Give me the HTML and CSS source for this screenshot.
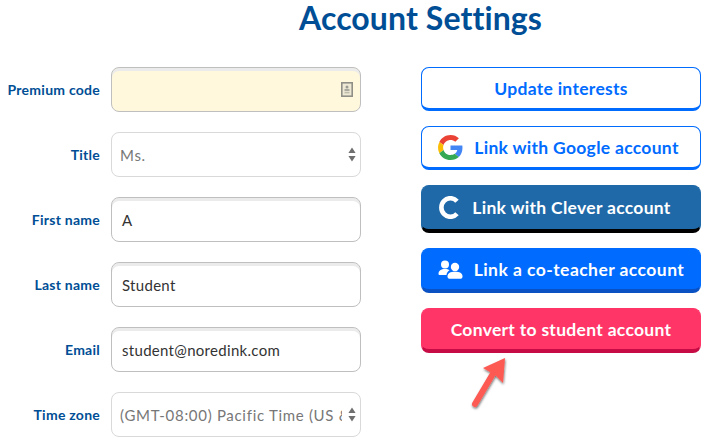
FILE: index.html
```html
<!DOCTYPE html>
<html lang="en">
<head>
<meta charset="utf-8">
<title>Account Settings</title>
<link rel="stylesheet" href="styles.css">
</head>
<body>
<main class="page">
  <h1 class="title">Account Settings</h1>
  <div class="columns">
    <form class="form">
      <div class="row">
        <span class="label">Premium code</span>
        <div class="field field-input field-code">
          <svg class="code-icon" width="12" height="15" viewBox="0 0 12 15">
            <rect x="0.800" y="0.800" width="10.400" height="13.400" fill="#eee9d5" stroke="#8f8f88" stroke-width="1.600"/>
            <circle cx="6" cy="5" r="1.500" fill="#9a9a92"/>
            <rect x="3.500" y="7.200" width="5" height="1.600" fill="#9a9a92"/>
            <rect x="3.500" y="9.800" width="5" height="1.600" fill="#bdbbaa"/>
          </svg>
        </div>
      </div>
      <div class="row">
        <span class="label">Title</span>
        <div class="field field-select"><span class="select-text">Ms.</span>
          <svg class="updown" width="8" height="15" viewBox="0 0 8 15"><path d="M4 0.500 L7.600 6 H0.400 Z M0.400 9 H7.600 L4 14.500 Z" fill="#6f6f6f"/></svg>
        </div>
      </div>
      <div class="row">
        <span class="label">First name</span>
        <div class="field field-input">A</div>
      </div>
      <div class="row">
        <span class="label">Last name</span>
        <div class="field field-input">Student</div>
      </div>
      <div class="row">
        <span class="label">Email</span>
        <div class="field field-input">student@noredink.com</div>
      </div>
      <div class="row">
        <span class="label">Time zone</span>
        <div class="field field-select"><span class="select-text">(GMT-08:00) Pacific Time (US &amp; Canada)</span>
          <svg class="updown" width="8" height="15" viewBox="0 0 8 15"><path d="M4 0.500 L7.600 6 H0.400 Z M0.400 9 H7.600 L4 14.500 Z" fill="#6f6f6f"/></svg>
        </div>
      </div>
    </form>
    <div class="actions">
      <button type="button" class="btn btn-outline">Update interests</button>
      <button type="button" class="btn btn-outline btn-google">
        <svg class="btn-icon" width="25" height="25" viewBox="0 0 48 48">
          <path fill="#EA4335" d="M24 9.500c3.500 0 6.700 1.200 9.200 3.600l6.900-6.900C35.900 2.400 30.500 0 24 0 14.600 0 6.500 5.400 2.600 13.200l8 6.200C12.500 13.700 17.800 9.500 24 9.500z"/>
          <path fill="#4285F4" d="M47 24.500c0-1.600-.1-3.100-.4-4.500H24v9h13c-.6 3-2.200 5.500-4.800 7.200l7.700 6C44.400 38.500 47 32 47 24.500z"/>
          <path fill="#FBBC05" d="M10.600 28.600c-.5-1.500-.8-3-.8-4.600s.3-3.100.8-4.600l-8-6.200C.9 16.500 0 20.100 0 24s.9 7.500 2.600 10.800l8-6.200z"/>
          <path fill="#34A853" d="M24 48c6.500 0 11.900-2.100 15.900-5.800l-7.700-6c-2.200 1.500-4.900 2.300-8.200 2.300-6.200 0-11.500-4.200-13.400-9.900l-8 6.200C6.500 42.600 14.600 48 24 48z"/>
        </svg>
        <span>Link with Google account</span>
      </button>
      <button type="button" class="btn btn-clever">
        <svg class="btn-icon" width="21" height="23" viewBox="0 0 21 23"><path d="M19 17.800 A9 9.300 0 1 1 19 5.200" fill="none" stroke="#fff" stroke-width="4.600"/></svg>
        <span>Link with Clever account</span>
      </button>
      <button type="button" class="btn btn-blue">
        <svg class="btn-icon" width="25" height="19" viewBox="0 0 25 19">
          <circle cx="7" cy="4.500" r="4" fill="#fff"/>
          <path d="M0.500 14 C0.500 10.500 3 9 7 9 C9 9 10.500 9.500 11.500 10.200 C9.500 11.500 8.500 13 8.500 15 H2 C1 15 0.500 14.800 0.500 14Z" fill="#fff"/>
          <circle cx="17" cy="7" r="4.200" fill="#fff"/>
          <path d="M9.500 16.500 C9.500 13 12.500 11.800 17 11.800 C21.500 11.800 24.500 13 24.500 16.500 C24.500 18 23.500 18.800 22 18.800 H12 C10.500 18.800 9.500 18 9.500 16.500Z" fill="#fff"/>
        </svg>
        <span>Link a co-teacher account</span>
      </button>
      <button type="button" class="btn btn-pink">Convert to student account</button>
    </div>
  </div>
  <svg class="arrow" width="46" height="60" viewBox="0 0 46 60">
    <defs><filter id="arrow-shadow" x="-30%" y="-30%" width="160%" height="160%"><feDropShadow dx="0.500" dy="1.500" stdDeviation="1.300" flood-color="#000" flood-opacity="0.550"/></filter></defs>
    <g filter="url(#arrow-shadow)">
      <path d="M5 51 L24 19" stroke="#fc5a52" stroke-width="6" stroke-linecap="round" fill="none"/>
      <path d="M35 5 L33 30 L25 22 L13 15 Z" fill="#fc5a52"/>
    </g>
  </svg>
</main>
</body>
</html>
```

FILE: styles.css
```css
* { box-sizing: border-box; }
html, body { margin: 0; padding: 0; background: #fff; overflow: hidden; }
body { width: 708px; height: 448px; font-family: Lato, "Open Sans", sans-serif; }
.page { position: relative; width: 708px; height: 448px; padding: 0 7px 0 7px; }
.title {
  margin: 0;
  padding-left: 292px;
  height: 67px;
  font-size: 32px;
  line-height: 36px;
  font-weight: 700;
  color: #004e95;
  letter-spacing: 0.1px;
  white-space: nowrap;
}
.columns { display: flex; gap: 60px; }
.form { display: flex; flex-direction: column; gap: 20px; width: 354px; }
.row { display: flex; align-items: center; height: 45px; }
.label {
  width: 104px;
  padding-right: 11px;
  flex: none;
  text-align: right;
  font-size: 14px;
  font-weight: 700;
  color: #004e95;
  white-space: nowrap;
  letter-spacing: 0.25px;
}
.field {
  display: flex;
  align-items: center;
  width: 250px;
  height: 45px;
  border-radius: 8px;
  font-size: 15px;
  color: #333;
  padding: 0 10px;
  background: #fff;
  letter-spacing: 0.3px;
  white-space: nowrap;
}
.field-input {
  border: 1px solid #bfbfbf;
  box-shadow: inset 0 3px 0 #ebebeb;
  justify-content: flex-start;
}
.field-code { background: #fff8dc; justify-content: flex-end; padding-right: 7px; }
.code-icon { flex: none; }
.field-select {
  border: 1px solid #d9d9d9;
  color: #777;
  padding: 0 4px 0 8px;
  justify-content: space-between;
  gap: 6px;
  letter-spacing: 0.7px;
}
.select-text { flex: 1 1 auto; overflow: hidden; min-width: 0; }
.updown { flex: none; }
.actions { display: flex; flex-direction: column; width: 280px; }
.btn {
  display: flex;
  align-items: center;
  justify-content: center;
  gap: 11px;
  width: 280px;
  height: 44px;
  margin: 0 0 15px;
  padding: 0;
  border: 1px solid #006bff;
  border-bottom-width: 3px;
  border-radius: 8px;
  background: #fff;
  color: #006bff;
  font-family: inherit;
  font-size: 17.500px;
  font-weight: 700;
  letter-spacing: 0.3px;
  white-space: nowrap;
}
.btn-icon { flex: none; }
.btn-google { padding-right: 5px; }
.btn-clever { height: 48px; gap: 13px; padding-right: 13px; background: #1f69a9; border-color: #1f69a9; border-bottom: 4px solid #000; color: #fff; }
.btn-blue { height: 45px; background: #006bff; border-color: #006bff; border-bottom: 4px solid #0a52c4; color: #fff; letter-spacing: 0.45px; }
.btn-pink { height: 45px; background: #ff3568; border-color: #ff3568; border-bottom: 4px solid #c60b45; color: #fff; }
.arrow { position: absolute; left: 470px; top: 353px; }
```
